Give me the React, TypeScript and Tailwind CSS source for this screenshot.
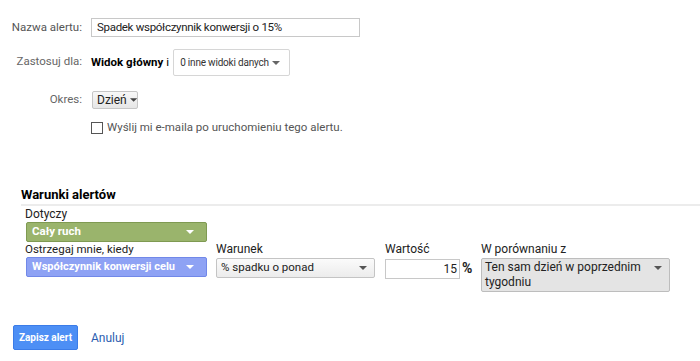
import React from 'react';

const Caret = ({ className = '' }: { className?: string }) => (
  <svg width="8" height="4" viewBox="0 0 8 4" className={className}>
    <path d="M0 0 L8 0 L4 4 Z" fill="currentColor" />
  </svg>
);

export default function App() {
  return (
    <div className="w-[700px] h-[361px] bg-white font-['Roboto',sans-serif] text-[#222] overflow-hidden">
      {/* Top settings */}
      <div className="pt-[18px]">
        <div className="flex items-center h-[19px]">
          <div className="w-[82px] text-right text-[11.5px] text-[#555]">Nazwa alertu:</div>
          <div className="ml-[9px] w-[269px] h-[19px] border border-[#c8c8c8] px-[5px] flex items-center text-[11.5px] tracking-[-0.3px] text-[#222] whitespace-nowrap">
            Spadek współczynnik konwersji o 15%
          </div>
        </div>

        <div className="flex items-center mt-[12px] h-[27px]">
          <div className="w-[82px] text-right text-[11.5px] text-[#666] -mt-[2px]">Zastosuj dla:</div>
          <div className="ml-[9px] text-[11.5px] font-bold text-black whitespace-nowrap">Widok główny</div>
          <div className="ml-[3px] text-[11.5px] text-black">i</div>
          <div className="ml-[4px] w-[117px] h-[27px] border border-[#d6d6d6] rounded-[2px] flex items-center justify-between pl-[6px] pr-[9px] text-[10px] tracking-[-0.2px] text-[#333] whitespace-nowrap">
            <span>0 inne widoki danych</span>
            <Caret className="text-[#666]" />
          </div>
        </div>

        <div className="flex items-center mt-[15px] h-[18px]">
          <div className="w-[82px] text-right text-[11.5px] text-[#666]">Okres:</div>
          <div className="ml-[10px] h-[18px] w-[46px] border border-[#c6c6c6] rounded-[2px] bg-gradient-to-b from-[#f8f8f8] to-[#e6e6e6] flex items-center pl-[4px] text-[12px] text-[#222] gap-[3px] whitespace-nowrap">
            <span>Dzień</span>
            <Caret className="text-[#444]" />
          </div>
        </div>

        <div className="flex items-center mt-[12px] ml-[91px] h-[14px]">
          <div className="w-[12px] h-[12px] border border-[#555] bg-white" />
          <div className="ml-[4px] text-[11.5px] text-[#555] whitespace-nowrap">Wyślij mi e-maila po uruchomieniu tego alertu.</div>
        </div>
      </div>

      {/* Alert conditions */}
      <div className="mt-[52px] ml-[21px]">
        <div className="text-[13px] font-bold text-black leading-[16px]">Warunki alertów</div>
        <div className="h-[2px] bg-[#ececec] mt-[1px]" />
        <div className="ml-[4px] mt-[1px] text-[12px] text-[#222] leading-[14px]">Dotyczy</div>
        <div className="ml-[5px] mt-[1px] w-[181px] h-[20px] bg-[#9ab46c] border border-[#7f9a52] rounded-[2px] flex items-center justify-between pl-[5px] pr-[12px] text-[11.5px] font-bold text-white whitespace-nowrap">
          <span>Cały ruch</span>
          <Caret className="text-white" />
        </div>

        <div className="flex ml-[4px]">
          <div className="w-[191px]">
            <div className="text-[11.5px] text-[#222] leading-[14px] whitespace-nowrap">Ostrzegaj mnie, kiedy</div>
            <div className="ml-[1px] mt-[1px] w-[181px] h-[20px] bg-[#8ea2f4] border border-[#7188e8] rounded-[2px] flex items-center justify-between pl-[5px] pr-[12px] text-[11px] font-bold text-white whitespace-nowrap">
              <span>Współczynnik konwersji celu</span>
              <Caret className="text-white" />
            </div>
          </div>
          <div className="w-[169px]">
            <div className="text-[12px] text-[#222] leading-[14px]">Warunek</div>
            <div className="mt-[2px] w-[159px] h-[20px] border border-[#c4c4c4] rounded-[2px] bg-gradient-to-b from-[#fbfbfb] to-[#ececec] flex items-center justify-between pl-[4px] pr-[7px] text-[11.5px] text-[#222] whitespace-nowrap">
              <span>% spadku o ponad</span>
              <Caret className="text-[#555]" />
            </div>
          </div>
          <div className="w-[96px]">
            <div className="text-[12px] text-[#222] leading-[14px]">Wartość</div>
            <div className="mt-[2px] flex items-center">
              <div className="w-[75px] h-[20px] border border-[#c8c8c8] flex items-center justify-end pr-[2px] text-[12px] text-[#222]">15</div>
              <span className="ml-[2px] text-[14px] font-bold text-[#222]">%</span>
            </div>
          </div>
          <div>
            <div className="text-[12px] text-[#222] leading-[14px] whitespace-nowrap">W porównaniu z</div>
            <div className="mt-[2px] w-[189px] h-[34px] border border-[#bdbdbd] rounded-[2px] bg-[#e4e4e4] flex justify-between pl-[3px] pr-[7px] pt-[1px] text-[12px] text-[#222] leading-[15px]">
              <span>Ten sam dzień w poprzednim<br />tygodniu</span>
              <Caret className="text-[#555] mt-[6px]" />
            </div>
          </div>
        </div>
      </div>

      {/* Actions */}
      <div className="flex items-center mt-[33px] ml-[13px]">
        <div className="w-[65px] h-[25px] bg-[#4d8ff5] border border-[#3b7ce8] rounded-[2px] flex items-center justify-center text-[10px] font-bold text-white whitespace-nowrap">
          Zapisz alert
        </div>
        <div className="ml-[13px] text-[12px] text-[#2a5db0]">Anuluj</div>
      </div>
    </div>
  );
}
